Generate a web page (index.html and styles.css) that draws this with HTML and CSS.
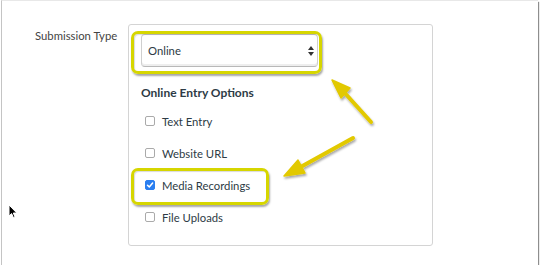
FILE: index.html
```html
<!DOCTYPE html>
<html lang="en">
<head>
    <meta charset="UTF-8">
    <meta name="viewport" content="width=device-width, initial-scale=1.0">
    <title>Submission Type</title>
    <link rel="stylesheet" href="styles.css">
</head>
<body>
    <div class="frame">
        <div class="row">
            <div class="label">Submission Type</div>
            <div class="card">
                <div class="select">
                    <span>Online</span>
                    <svg class="updown" width="6" height="10" viewBox="0 0 6 10">
                        <path d="M3 0 L6 4 L0 4 Z M3 10 L6 6 L0 6 Z" fill="#333"/>
                    </svg>
                </div>
                <h3 class="group-title">Online Entry Options</h3>
                <ul class="options">
                    <li><span class="box"></span>Text Entry</li>
                    <li><span class="box"></span>Website URL</li>
                    <li><span class="box checked">
                        <svg width="8" height="8" viewBox="0 0 8 8"><path d="M1.5 4.2 L3.3 6 L6.6 2" fill="none" stroke="#fff" stroke-width="1.5" stroke-linecap="round" stroke-linejoin="round"/></svg>
                    </span>Media Recordings</li>
                    <li><span class="box"></span>File Uploads</li>
                </ul>
            </div>
        </div>

        <!-- annotations -->
        <div class="mark mark-select"></div>
        <div class="mark mark-media"></div>
        <svg class="arrows" width="540" height="269" viewBox="0 0 540 269">
            <defs>
                <filter id="sh" x="-20%" y="-20%" width="140%" height="140%">
                    <feDropShadow dx="1" dy="2" stdDeviation="1" flood-color="#000" flood-opacity="0.35"/>
                </filter>
            </defs>
            <g filter="url(#sh)" fill="#e2c900" stroke="#e2c900">
                <line x1="371" y1="122" x2="343" y2="91" stroke-width="4" stroke-linecap="round"/>
                <polygon points="332,80 341,98 350,88" stroke-width="1.5" stroke-linejoin="round"/>
                <line x1="353" y1="138" x2="297" y2="169" stroke-width="4" stroke-linecap="round"/>
                <polygon points="284,176 298,160 305,173" stroke-width="1.5" stroke-linejoin="round"/>
            </g>
        </svg>
        <svg class="cursor" width="10" height="15" viewBox="0 0 10 15">
            <path d="M1 1 L1 12 L3.6 9.6 L5.4 13.6 L7 12.9 L5.3 9 L8.8 9 Z" fill="#000" stroke="#fff" stroke-width="1"/>
        </svg>
    </div>
</body>
</html>
```

FILE: styles.css
```css
body {
    margin: 0;
    background-color: #fff;
    font-family: Lato, "Open Sans", sans-serif;
    color: #2d3b45;
}
.frame {
    position: relative;
    width: 536px;
    height: 264px;
    margin-left: 1px;
    border-left: 1px solid #c4c4c4;
    border-top: 1px solid #e8e8e8;
    box-shadow: 1px 2px 1px #8e8e8e;
    background-color: #fff;
}
.row {
    display: flex;
    padding-top: 23px;
}
.label {
    width: 93px;
    padding-left: 33px;
    padding-top: 5px;
    font-size: 11.3px;
    color: #444;
}
.card {
    width: 279px;
    height: 211px;
    border: 1px solid #d4d4d4;
    border-radius: 3px;
    padding: 9px 12px 0;
}
.select {
    display: flex;
    align-items: center;
    justify-content: space-between;
    width: 166px;
    height: 31px;
    padding: 0 3px 0 6px;
    border: 1px solid #cfcfcf;
    border-bottom-color: #b8b8b8;
    border-radius: 4px;
    font-size: 11.3px;
    color: #2d3b45;
    box-shadow: inset 0 -2px 0 #eee;
}
.group-title {
    margin: 18px 0 0;
    font-size: 12px;
    font-weight: bold;
    color: #2d3b45;
}
.options {
    list-style: none;
    margin: 5px 0 0;
    padding: 0;
}
.options li {
    display: flex;
    align-items: center;
    height: 32px;
    font-size: 11.3px;
    color: #2d3b45;
}
.box {
    display: flex;
    align-items: center;
    justify-content: center;
    width: 8px;
    height: 8px;
    margin: 0 7px 0 4px;
    border: 1px solid #aaa;
    border-radius: 2px;
    background-color: #fff;
}
.box.checked {
    background-color: #2a7ef0;
    border-color: #2a7ef0;
}
.mark {
    position: absolute;
    border: 3px solid #d6d600;
    border-radius: 7px;
    box-shadow: 1px 2px 2px rgba(0, 0, 0, 0.35), inset 1px 1px 1px rgba(0, 0, 0, 0.15);
}
.mark-select {
    left: 129px;
    top: 30px;
    width: 185px;
    height: 37px;
}
.mark-media {
    left: 129px;
    top: 167px;
    width: 132px;
    height: 31px;
}
.arrows {
    position: absolute;
    left: -2px;
    top: -1px;
}
.cursor {
    position: absolute;
    left: 6px;
    top: 203px;
}
```
